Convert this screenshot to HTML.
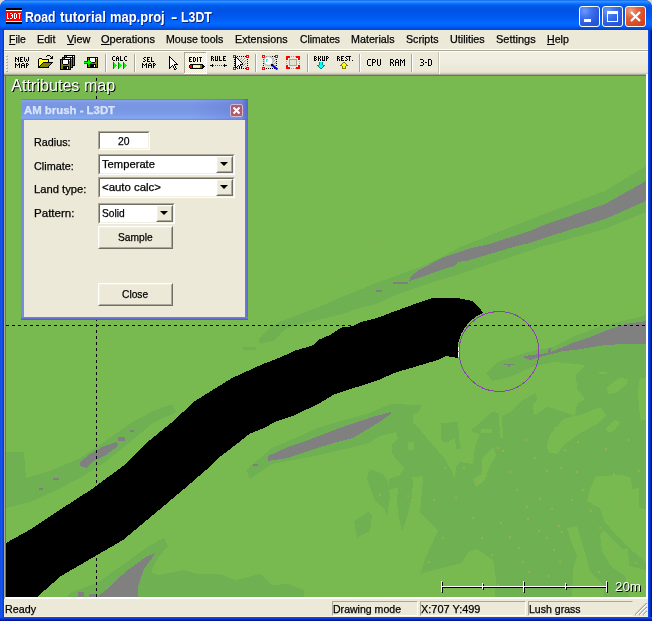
<!DOCTYPE html>
<html><head><meta charset="utf-8">
<style>
*{box-sizing:border-box;margin:0;padding:0}
html,body{width:652px;height:621px;overflow:hidden;background:#DADADA;font-family:"Liberation Sans",sans-serif;font-size:11px;color:#000}
.t{position:absolute;white-space:nowrap;line-height:13px;font-size:11px;transform-origin:0 0;-webkit-text-stroke:0.25px}
#win{position:absolute;left:0;top:0;width:652px;height:621px;background:#0831D9;overflow:hidden;border-radius:7px 7px 0 0;will-change:transform}
#bl{position:absolute;left:0;top:30px;width:4px;height:591px;background:linear-gradient(90deg,#0A3EDC 0,#1A5EF0 1px,#0F52EA 2px,#0840DC 3px,#0734D0 4px)}
#br{position:absolute;left:648px;top:30px;width:4px;height:591px;background:linear-gradient(90deg,#0F52EA 0,#0A44E0 1px,#0632CE 2px,#021C9C 3px,#001488 4px)}
#bb{position:absolute;left:0;top:617px;width:652px;height:4px;background:linear-gradient(#0F52EA 0,#0A44E0 1px,#0632CE 2px,#021C9C 3px,#001488 4px)}
#title{position:absolute;left:0;top:0;width:652px;height:30px;border-radius:7px 7px 0 0;
 background:linear-gradient(#0058EE 0px,#3A93FF 1px,#288EFF 2px,#127DFF 3px,#036FFC 4px,#0262EE 5px,#0057E5 7px,#0054E3 10px,#0055EB 14px,#005BF5 18px,#026AFE 23px,#0061FC 26px,#0048CE 29px,#0144D0 30px)}
#tl{position:absolute;left:0;top:0;width:652px;height:30px;background:#fff}
#title .txt{position:absolute;top:8.7px;font-weight:bold;font-size:14.5px;line-height:16px;color:#fff;text-shadow:1px 1px 0 #0A1F84;white-space:nowrap;transform-origin:0 0}
#ico{position:absolute;left:6px;top:8px;width:16px;height:16px}
.cb{position:absolute;top:6px;width:21px;height:21px;border:1px solid #fff;border-radius:3px;background:radial-gradient(circle at 25% 20%,#6C9AF8 0,#3D70EC 35%,#2858DC 70%,#2350D0 100%)}
#bclose{background:radial-gradient(circle at 25% 20%,#F0A088 0,#E4603A 35%,#DA4A22 70%,#C83C14 100%)}
#menu{position:absolute;left:4px;top:30px;width:644px;height:19px;background:#ECE9D8}
#tbwrap{position:absolute;left:4px;top:49px;width:644px;height:27px;background:#ECE9D8}
#tbsvg{position:absolute;left:0;top:3px}
#map{position:absolute;left:6px;top:76px;width:640px;height:521px;overflow:hidden}
#status{position:absolute;left:4px;top:599px;width:644px;height:18px;background:#ECE9D8}
#dlg{position:absolute;left:21px;top:99px;width:227px;height:221px;background:linear-gradient(90deg,#7888E0 0,#7A8CE2 3px,#7080DC 224px,#5A64D0 227px)}
#dlgb{position:absolute;left:0;top:218px;width:227px;height:3px;background:linear-gradient(#7484DE 0,#6470D6 1.5px,#4E56C8 3px)}
#dlgt{position:absolute;left:0;top:0;width:227px;height:21px;background:linear-gradient(90deg,rgba(90,100,205,0) 0,rgba(90,100,205,0) 75%,rgba(90,100,205,0.35) 97%,rgba(70,80,190,0.7) 100%),linear-gradient(#6C80D6 0,#6C80D6 1px,#86A2EC 1px,#7F9CE8 3px,#7B96E2 5px,#7896E2 10px,#7B9CE8 15px,#82A8F0 19px,#7C9AE6 20px,#7088DC 21px)}
#dlgc{position:absolute;left:3px;top:21px;width:221px;height:197px;background:#ECE9D8}
.sunk{position:absolute;background:#fff;border:1px solid;border-color:#ACA899 #fff #fff #ACA899}
.sunk:before{content:"";position:absolute;left:0;top:0;right:0;bottom:0;border:1px solid;border-color:#716F64 #F1EFE2 #F1EFE2 #716F64}
.btn{position:absolute;background:#ECE9D8;border:1px solid;border-color:#fff #716F64 #716F64 #fff}
.btn:before{content:"";position:absolute;left:0;top:0;right:0;bottom:0;border:1px solid;border-color:#F1EFE2 #ACA899 #ACA899 #F1EFE2}
.arr{position:absolute;width:0;height:0;border-left:4px solid transparent;border-right:4px solid transparent;border-top:4px solid #000}
</style></head><body>
<div id="win">
 <div id="title">
  <svg id="ico" viewBox="0 0 16 16" shape-rendering="crispEdges"><rect width="16" height="16" fill="#000"/><rect y="2" width="16" height="1" fill="#fff"/><rect y="13" width="16" height="1" fill="#fff"/><rect y="3" width="16" height="10" fill="#F00"/>
  <path fill="#fff" d="M1 5h1v6h-1zM2 10h1v1h-1zM4 5h2v1h-2zM6 6h1v4h-1zM5 7h1v1h-1zM4 10h2v1h-2zM8 5h1v6h-1zM9 5h1v1h-1zM9 10h1v1h-1zM10 6h1v4h-1zM12 5h3v1h-3zM13 6h1v5h-1z"/></svg>
  <div class="txt" style="left:25px;transform:scaleX(0.841)">Road</div><div class="txt" style="left:59.5px;transform:scaleX(0.936)">tutorial</div><div class="txt" style="left:110px;transform:scaleX(0.893)">map.proj</div><div class="txt" style="left:170.5px;transform:scaleX(1.322)">-</div><div class="txt" style="left:180.5px;transform:scaleX(0.850)">L3DT</div>
  <div class="cb" id="bmin" style="left:579px"><svg width="19" height="19" style="position:absolute;left:0;top:0" shape-rendering="crispEdges"><rect x="4" y="12" width="7" height="3" fill="#fff"/></svg></div>
  <div class="cb" id="bmax" style="left:602px"><svg width="19" height="19" style="position:absolute;left:0;top:0" shape-rendering="crispEdges"><path d="M4 4h11v11h-11z M5 7h9v7h-9z" fill="#fff" fill-rule="evenodd"/></svg></div>
  <div class="cb" id="bclose" style="left:625px"><svg width="19" height="19" style="position:absolute;left:0;top:0"><path d="M5 5L14 14M14 5L5 14" stroke="#fff" stroke-width="2.2"/></svg></div>
 </div>
 <div id="bl"></div><div id="br"></div><div id="bb"></div>
 <div id="menu">
<span class="t" style="left:5px;top:3px;transform:scaleX(0.949)"><u>F</u>ile</span>
<span class="t" style="left:33px;top:3px;transform:scaleX(0.974)">Edit</span>
<span class="t" style="left:62.5px;top:3px;transform:scaleX(0.987)"><u>V</u>iew</span>
<span class="t" style="left:97px;top:3px;transform:scaleX(1.004)"><u>O</u>perations</span>
<span class="t" style="left:162px;top:3px;transform:scaleX(0.965)">Mouse tools</span>
<span class="t" style="left:231px;top:3px;transform:scaleX(0.976)">Extensions</span>
<span class="t" style="left:295.5px;top:3px;transform:scaleX(0.935)">Climates</span>
<span class="t" style="left:347px;top:3px;transform:scaleX(0.975)">Materials</span>
<span class="t" style="left:402px;top:3px;transform:scaleX(0.967)">Scripts</span>
<span class="t" style="left:446px;top:3px;transform:scaleX(0.980)">Utilities</span>
<span class="t" style="left:492px;top:3px;transform:scaleX(0.997)">Settings</span>
<span class="t" style="left:543px;top:3px;transform:scaleX(0.965)"><u>H</u>elp</span>
 </div>
 <div id="tbwrap">
  <div style="position:absolute;left:0;top:0;width:644px;height:1px;background:#fff"></div>
  <div style="position:absolute;left:0;top:1px;width:644px;height:1px;background:#ACA899"></div>
  <div style="position:absolute;left:0;top:2px;width:644px;height:1px;background:#fff"></div>
  <div style="position:absolute;left:436px;top:3px;width:208px;height:19px;background:linear-gradient(#F2F0E4 0,#EFEDDF 50%,#EAE7D7 100%)"></div>
  <div style="position:absolute;left:0;top:22px;width:644px;height:1px;background:#E9E6D5"></div>
  <div style="position:absolute;left:0;top:23px;width:644px;height:1px;background:#E2DFCD"></div>
  <div style="position:absolute;left:0;top:24px;width:644px;height:1px;background:#D3CFBD"></div>
  <div style="position:absolute;left:0;top:25px;width:642px;height:1px;background:#ACA899"></div>
  <div style="position:absolute;left:0;top:26px;width:642px;height:1px;background:#716F64"></div>
  <svg id="tbsvg" width="644" height="24" viewBox="4 52 644 24" shape-rendering="crispEdges"><defs><pattern id="chk" x="0" y="0" width="2" height="2" patternUnits="userSpaceOnUse"><rect width="2" height="2" fill="#FFFFFF"/><rect x="0" y="0" width="1" height="1" fill="#ECE9D8"/><rect x="1" y="1" width="1" height="1" fill="#ECE9D8"/></pattern></defs><rect x="6" y="55" width="1" height="1" fill="#FFFFFF"/><rect x="7" y="55" width="1" height="1" fill="#D0CCBB"/><rect x="6" y="56" width="2" height="1" fill="#B4B09E"/><rect x="6" y="58" width="1" height="1" fill="#FFFFFF"/><rect x="7" y="58" width="1" height="1" fill="#D0CCBB"/><rect x="6" y="59" width="2" height="1" fill="#B4B09E"/><rect x="6" y="61" width="1" height="1" fill="#FFFFFF"/><rect x="7" y="61" width="1" height="1" fill="#D0CCBB"/><rect x="6" y="62" width="2" height="1" fill="#B4B09E"/><rect x="6" y="64" width="1" height="1" fill="#FFFFFF"/><rect x="7" y="64" width="1" height="1" fill="#D0CCBB"/><rect x="6" y="65" width="2" height="1" fill="#B4B09E"/><rect x="6" y="67" width="1" height="1" fill="#FFFFFF"/><rect x="7" y="67" width="1" height="1" fill="#D0CCBB"/><rect x="6" y="68" width="2" height="1" fill="#B4B09E"/><rect x="6" y="70" width="1" height="1" fill="#FFFFFF"/><rect x="7" y="70" width="1" height="1" fill="#D0CCBB"/><rect x="6" y="71" width="2" height="1" fill="#B4B09E"/><rect x="15" y="57" width="1" height="1" fill="#000"/><rect x="18" y="57" width="1" height="1" fill="#000"/><rect x="15" y="58" width="2" height="1" fill="#000"/><rect x="18" y="58" width="1" height="1" fill="#000"/><rect x="15" y="59" width="1" height="1" fill="#000"/><rect x="17" y="59" width="2" height="1" fill="#000"/><rect x="15" y="60" width="1" height="1" fill="#000"/><rect x="18" y="60" width="1" height="1" fill="#000"/><rect x="15" y="61" width="1" height="1" fill="#000"/><rect x="18" y="61" width="1" height="1" fill="#000"/><rect x="20" y="57" width="3" height="1" fill="#000"/><rect x="20" y="58" width="1" height="1" fill="#000"/><rect x="20" y="59" width="2" height="1" fill="#000"/><rect x="20" y="60" width="1" height="1" fill="#000"/><rect x="20" y="61" width="3" height="1" fill="#000"/><rect x="24" y="57" width="1" height="1" fill="#000"/><rect x="28" y="57" width="1" height="1" fill="#000"/><rect x="24" y="58" width="1" height="1" fill="#000"/><rect x="28" y="58" width="1" height="1" fill="#000"/><rect x="24" y="59" width="1" height="1" fill="#000"/><rect x="26" y="59" width="1" height="1" fill="#000"/><rect x="28" y="59" width="1" height="1" fill="#000"/><rect x="24" y="60" width="1" height="1" fill="#000"/><rect x="26" y="60" width="1" height="1" fill="#000"/><rect x="28" y="60" width="1" height="1" fill="#000"/><rect x="25" y="61" width="1" height="1" fill="#000"/><rect x="27" y="61" width="1" height="1" fill="#000"/><rect x="15" y="63" width="1" height="1" fill="#000"/><rect x="19" y="63" width="1" height="1" fill="#000"/><rect x="15" y="64" width="2" height="1" fill="#000"/><rect x="18" y="64" width="2" height="1" fill="#000"/><rect x="15" y="65" width="1" height="1" fill="#000"/><rect x="17" y="65" width="1" height="1" fill="#000"/><rect x="19" y="65" width="1" height="1" fill="#000"/><rect x="15" y="66" width="1" height="1" fill="#000"/><rect x="19" y="66" width="1" height="1" fill="#000"/><rect x="15" y="67" width="1" height="1" fill="#000"/><rect x="19" y="67" width="1" height="1" fill="#000"/><rect x="22" y="63" width="2" height="1" fill="#000"/><rect x="21" y="64" width="1" height="1" fill="#000"/><rect x="24" y="64" width="1" height="1" fill="#000"/><rect x="21" y="65" width="4" height="1" fill="#000"/><rect x="21" y="66" width="1" height="1" fill="#000"/><rect x="24" y="66" width="1" height="1" fill="#000"/><rect x="21" y="67" width="1" height="1" fill="#000"/><rect x="24" y="67" width="1" height="1" fill="#000"/><rect x="26" y="63" width="2" height="1" fill="#000"/><rect x="26" y="64" width="1" height="1" fill="#000"/><rect x="28" y="64" width="1" height="1" fill="#000"/><rect x="26" y="65" width="2" height="1" fill="#000"/><rect x="26" y="66" width="1" height="1" fill="#000"/><rect x="26" y="67" width="1" height="1" fill="#000"/><rect x="47" y="55" width="3" height="1" fill="#000"/><rect x="46" y="56" width="1" height="1" fill="#000"/><rect x="50" y="56" width="1" height="1" fill="#000"/><rect x="52" y="56" width="1" height="1" fill="#000"/><rect x="51" y="57" width="2" height="1" fill="#000"/><rect x="39" y="58" width="3" height="1" fill="#000"/><rect x="50" y="58" width="3" height="1" fill="#000"/><rect x="38" y="59" width="1" height="1" fill="#000"/><rect x="39" y="59" width="1" height="1" fill="#FFFF00"/><rect x="40" y="59" width="1" height="1" fill="#FFFFFF"/><rect x="41" y="59" width="1" height="1" fill="#FFFF00"/><rect x="42" y="59" width="7" height="1" fill="#000"/><rect x="38" y="60" width="1" height="1" fill="#000"/><rect x="39" y="60" width="1" height="1" fill="#FFFFFF"/><rect x="40" y="60" width="1" height="1" fill="#FFFF00"/><rect x="41" y="60" width="1" height="1" fill="#FFFFFF"/><rect x="42" y="60" width="1" height="1" fill="#FFFF00"/><rect x="43" y="60" width="1" height="1" fill="#FFFFFF"/><rect x="44" y="60" width="1" height="1" fill="#FFFF00"/><rect x="45" y="60" width="1" height="1" fill="#FFFFFF"/><rect x="46" y="60" width="1" height="1" fill="#FFFF00"/><rect x="47" y="60" width="1" height="1" fill="#FFFFFF"/><rect x="48" y="60" width="1" height="1" fill="#000"/><rect x="38" y="61" width="1" height="1" fill="#000"/><rect x="39" y="61" width="1" height="1" fill="#FFFF00"/><rect x="40" y="61" width="1" height="1" fill="#FFFFFF"/><rect x="41" y="61" width="1" height="1" fill="#FFFF00"/><rect x="42" y="61" width="1" height="1" fill="#FFFFFF"/><rect x="43" y="61" width="1" height="1" fill="#FFFF00"/><rect x="44" y="61" width="1" height="1" fill="#FFFFFF"/><rect x="45" y="61" width="1" height="1" fill="#FFFF00"/><rect x="46" y="61" width="1" height="1" fill="#FFFFFF"/><rect x="47" y="61" width="1" height="1" fill="#FFFF00"/><rect x="48" y="61" width="1" height="1" fill="#000"/><rect x="38" y="62" width="1" height="1" fill="#000"/><rect x="39" y="62" width="1" height="1" fill="#FFFFFF"/><rect x="40" y="62" width="1" height="1" fill="#FFFF00"/><rect x="41" y="62" width="1" height="1" fill="#FFFFFF"/><rect x="42" y="62" width="1" height="1" fill="#FFFF00"/><rect x="43" y="62" width="10" height="1" fill="#000"/><rect x="38" y="63" width="1" height="1" fill="#000"/><rect x="39" y="63" width="1" height="1" fill="#FFFF00"/><rect x="40" y="63" width="1" height="1" fill="#FFFFFF"/><rect x="41" y="63" width="1" height="1" fill="#FFFF00"/><rect x="42" y="63" width="1" height="1" fill="#000"/><rect x="43" y="63" width="8" height="1" fill="#808000"/><rect x="51" y="63" width="1" height="1" fill="#000"/><rect x="38" y="64" width="1" height="1" fill="#000"/><rect x="39" y="64" width="1" height="1" fill="#FFFFFF"/><rect x="40" y="64" width="1" height="1" fill="#FFFF00"/><rect x="41" y="64" width="1" height="1" fill="#000"/><rect x="42" y="64" width="8" height="1" fill="#808000"/><rect x="50" y="64" width="1" height="1" fill="#000"/><rect x="38" y="65" width="1" height="1" fill="#000"/><rect x="39" y="65" width="1" height="1" fill="#FFFF00"/><rect x="40" y="65" width="1" height="1" fill="#000"/><rect x="41" y="65" width="8" height="1" fill="#808000"/><rect x="49" y="65" width="1" height="1" fill="#000"/><rect x="38" y="66" width="2" height="1" fill="#000"/><rect x="40" y="66" width="8" height="1" fill="#808000"/><rect x="48" y="66" width="1" height="1" fill="#000"/><rect x="38" y="67" width="11" height="1" fill="#000"/><rect x="64" y="55" width="11" height="1" fill="#000"/><rect x="64" y="56" width="1" height="1" fill="#000"/><rect x="65" y="56" width="1" height="1" fill="#808000"/><rect x="66" y="56" width="1" height="1" fill="#000"/><rect x="67" y="56" width="5" height="1" fill="#FFFFFF"/><rect x="72" y="56" width="1" height="1" fill="#000"/><rect x="73" y="56" width="1" height="1" fill="#FFFFFF"/><rect x="74" y="56" width="1" height="1" fill="#000"/><rect x="64" y="57" width="1" height="1" fill="#000"/><rect x="65" y="57" width="2" height="1" fill="#808000"/><rect x="67" y="57" width="5" height="1" fill="#000"/><rect x="72" y="57" width="2" height="1" fill="#808000"/><rect x="74" y="57" width="1" height="1" fill="#000"/><rect x="64" y="58" width="1" height="1" fill="#000"/><rect x="65" y="58" width="9" height="1" fill="#808000"/><rect x="74" y="58" width="1" height="1" fill="#000"/><rect x="64" y="59" width="1" height="1" fill="#000"/><rect x="65" y="59" width="9" height="1" fill="#808000"/><rect x="74" y="59" width="1" height="1" fill="#000"/><rect x="64" y="60" width="1" height="1" fill="#000"/><rect x="65" y="60" width="9" height="1" fill="#808000"/><rect x="74" y="60" width="1" height="1" fill="#000"/><rect x="64" y="61" width="1" height="1" fill="#000"/><rect x="65" y="61" width="9" height="1" fill="#808000"/><rect x="74" y="61" width="1" height="1" fill="#000"/><rect x="64" y="62" width="1" height="1" fill="#000"/><rect x="65" y="62" width="9" height="1" fill="#808000"/><rect x="74" y="62" width="1" height="1" fill="#000"/><rect x="64" y="63" width="1" height="1" fill="#000"/><rect x="65" y="63" width="9" height="1" fill="#808000"/><rect x="74" y="63" width="1" height="1" fill="#000"/><rect x="64" y="64" width="1" height="1" fill="#000"/><rect x="65" y="64" width="9" height="1" fill="#808000"/><rect x="74" y="64" width="1" height="1" fill="#000"/><rect x="64" y="65" width="11" height="1" fill="#000"/><rect x="62" y="57" width="11" height="1" fill="#000"/><rect x="62" y="58" width="1" height="1" fill="#000"/><rect x="63" y="58" width="1" height="1" fill="#808000"/><rect x="64" y="58" width="1" height="1" fill="#000"/><rect x="65" y="58" width="5" height="1" fill="#FFFFFF"/><rect x="70" y="58" width="1" height="1" fill="#000"/><rect x="71" y="58" width="1" height="1" fill="#FFFFFF"/><rect x="72" y="58" width="1" height="1" fill="#000"/><rect x="62" y="59" width="1" height="1" fill="#000"/><rect x="63" y="59" width="2" height="1" fill="#808000"/><rect x="65" y="59" width="5" height="1" fill="#000"/><rect x="70" y="59" width="2" height="1" fill="#808000"/><rect x="72" y="59" width="1" height="1" fill="#000"/><rect x="62" y="60" width="1" height="1" fill="#000"/><rect x="63" y="60" width="9" height="1" fill="#808000"/><rect x="72" y="60" width="1" height="1" fill="#000"/><rect x="62" y="61" width="1" height="1" fill="#000"/><rect x="63" y="61" width="9" height="1" fill="#808000"/><rect x="72" y="61" width="1" height="1" fill="#000"/><rect x="62" y="62" width="1" height="1" fill="#000"/><rect x="63" y="62" width="9" height="1" fill="#808000"/><rect x="72" y="62" width="1" height="1" fill="#000"/><rect x="62" y="63" width="1" height="1" fill="#000"/><rect x="63" y="63" width="9" height="1" fill="#808000"/><rect x="72" y="63" width="1" height="1" fill="#000"/><rect x="62" y="64" width="1" height="1" fill="#000"/><rect x="63" y="64" width="9" height="1" fill="#808000"/><rect x="72" y="64" width="1" height="1" fill="#000"/><rect x="62" y="65" width="1" height="1" fill="#000"/><rect x="63" y="65" width="9" height="1" fill="#808000"/><rect x="72" y="65" width="1" height="1" fill="#000"/><rect x="62" y="66" width="1" height="1" fill="#000"/><rect x="63" y="66" width="9" height="1" fill="#808000"/><rect x="72" y="66" width="1" height="1" fill="#000"/><rect x="62" y="67" width="11" height="1" fill="#000"/><rect x="60" y="59" width="11" height="1" fill="#000"/><rect x="60" y="60" width="1" height="1" fill="#000"/><rect x="61" y="60" width="1" height="1" fill="#808000"/><rect x="62" y="60" width="1" height="1" fill="#000"/><rect x="63" y="60" width="5" height="1" fill="#FFFFFF"/><rect x="68" y="60" width="1" height="1" fill="#000"/><rect x="69" y="60" width="1" height="1" fill="#FFFFFF"/><rect x="70" y="60" width="1" height="1" fill="#000"/><rect x="60" y="61" width="1" height="1" fill="#000"/><rect x="61" y="61" width="1" height="1" fill="#808000"/><rect x="62" y="61" width="1" height="1" fill="#000"/><rect x="63" y="61" width="5" height="1" fill="#FFFFFF"/><rect x="68" y="61" width="1" height="1" fill="#000"/><rect x="69" y="61" width="1" height="1" fill="#808000"/><rect x="70" y="61" width="1" height="1" fill="#000"/><rect x="60" y="62" width="1" height="1" fill="#000"/><rect x="61" y="62" width="1" height="1" fill="#808000"/><rect x="62" y="62" width="1" height="1" fill="#000"/><rect x="63" y="62" width="5" height="1" fill="#FFFFFF"/><rect x="68" y="62" width="1" height="1" fill="#000"/><rect x="69" y="62" width="1" height="1" fill="#808000"/><rect x="70" y="62" width="1" height="1" fill="#000"/><rect x="60" y="63" width="1" height="1" fill="#000"/><rect x="61" y="63" width="1" height="1" fill="#808000"/><rect x="62" y="63" width="1" height="1" fill="#000"/><rect x="63" y="63" width="5" height="1" fill="#FFFFFF"/><rect x="68" y="63" width="1" height="1" fill="#000"/><rect x="69" y="63" width="1" height="1" fill="#808000"/><rect x="70" y="63" width="1" height="1" fill="#000"/><rect x="60" y="64" width="1" height="1" fill="#000"/><rect x="61" y="64" width="2" height="1" fill="#808000"/><rect x="63" y="64" width="5" height="1" fill="#000"/><rect x="68" y="64" width="2" height="1" fill="#808000"/><rect x="70" y="64" width="1" height="1" fill="#000"/><rect x="60" y="65" width="1" height="1" fill="#000"/><rect x="61" y="65" width="9" height="1" fill="#808000"/><rect x="70" y="65" width="1" height="1" fill="#000"/><rect x="60" y="66" width="1" height="1" fill="#000"/><rect x="61" y="66" width="2" height="1" fill="#808000"/><rect x="63" y="66" width="6" height="1" fill="#000"/><rect x="69" y="66" width="1" height="1" fill="#808000"/><rect x="70" y="66" width="1" height="1" fill="#000"/><rect x="60" y="67" width="1" height="1" fill="#000"/><rect x="61" y="67" width="2" height="1" fill="#808000"/><rect x="63" y="67" width="4" height="1" fill="#000"/><rect x="67" y="67" width="1" height="1" fill="#FFFFFF"/><rect x="68" y="67" width="1" height="1" fill="#000"/><rect x="69" y="67" width="1" height="1" fill="#808000"/><rect x="70" y="67" width="1" height="1" fill="#000"/><rect x="60" y="68" width="1" height="1" fill="#000"/><rect x="61" y="68" width="2" height="1" fill="#808000"/><rect x="63" y="68" width="4" height="1" fill="#000"/><rect x="67" y="68" width="1" height="1" fill="#FFFFFF"/><rect x="68" y="68" width="1" height="1" fill="#000"/><rect x="69" y="68" width="1" height="1" fill="#808000"/><rect x="70" y="68" width="1" height="1" fill="#000"/><rect x="60" y="69" width="11" height="1" fill="#000"/><rect x="87" y="57" width="11" height="1" fill="#000"/><rect x="87" y="58" width="1" height="1" fill="#000"/><rect x="88" y="58" width="1" height="1" fill="#808000"/><rect x="89" y="58" width="1" height="1" fill="#000"/><rect x="90" y="58" width="5" height="1" fill="#FFFFFF"/><rect x="95" y="58" width="1" height="1" fill="#000"/><rect x="96" y="58" width="1" height="1" fill="#FFFFFF"/><rect x="97" y="58" width="1" height="1" fill="#000"/><rect x="87" y="59" width="1" height="1" fill="#000"/><rect x="88" y="59" width="1" height="1" fill="#808000"/><rect x="89" y="59" width="1" height="1" fill="#000"/><rect x="90" y="59" width="5" height="1" fill="#FFFFFF"/><rect x="95" y="59" width="1" height="1" fill="#000"/><rect x="96" y="59" width="1" height="1" fill="#808000"/><rect x="97" y="59" width="1" height="1" fill="#000"/><rect x="87" y="60" width="1" height="1" fill="#000"/><rect x="88" y="60" width="1" height="1" fill="#808000"/><rect x="89" y="60" width="1" height="1" fill="#000"/><rect x="90" y="60" width="5" height="1" fill="#FFFFFF"/><rect x="95" y="60" width="1" height="1" fill="#000"/><rect x="96" y="60" width="1" height="1" fill="#808000"/><rect x="97" y="60" width="1" height="1" fill="#000"/><rect x="87" y="61" width="1" height="1" fill="#000"/><rect x="88" y="61" width="1" height="1" fill="#808000"/><rect x="89" y="61" width="1" height="1" fill="#000"/><rect x="90" y="61" width="5" height="1" fill="#FFFFFF"/><rect x="95" y="61" width="1" height="1" fill="#000"/><rect x="96" y="61" width="1" height="1" fill="#808000"/><rect x="97" y="61" width="1" height="1" fill="#000"/><rect x="87" y="62" width="1" height="1" fill="#000"/><rect x="88" y="62" width="2" height="1" fill="#808000"/><rect x="90" y="62" width="5" height="1" fill="#000"/><rect x="95" y="62" width="2" height="1" fill="#808000"/><rect x="97" y="62" width="1" height="1" fill="#000"/><rect x="87" y="63" width="1" height="1" fill="#000"/><rect x="88" y="63" width="9" height="1" fill="#808000"/><rect x="97" y="63" width="1" height="1" fill="#000"/><rect x="87" y="64" width="1" height="1" fill="#000"/><rect x="88" y="64" width="2" height="1" fill="#808000"/><rect x="90" y="64" width="6" height="1" fill="#000"/><rect x="96" y="64" width="1" height="1" fill="#808000"/><rect x="97" y="64" width="1" height="1" fill="#000"/><rect x="87" y="65" width="1" height="1" fill="#000"/><rect x="88" y="65" width="2" height="1" fill="#808000"/><rect x="90" y="65" width="4" height="1" fill="#000"/><rect x="94" y="65" width="1" height="1" fill="#FFFFFF"/><rect x="95" y="65" width="1" height="1" fill="#000"/><rect x="96" y="65" width="1" height="1" fill="#808000"/><rect x="97" y="65" width="1" height="1" fill="#000"/><rect x="87" y="66" width="1" height="1" fill="#000"/><rect x="88" y="66" width="2" height="1" fill="#808000"/><rect x="90" y="66" width="4" height="1" fill="#000"/><rect x="94" y="66" width="1" height="1" fill="#FFFFFF"/><rect x="95" y="66" width="1" height="1" fill="#000"/><rect x="96" y="66" width="1" height="1" fill="#808000"/><rect x="97" y="66" width="1" height="1" fill="#000"/><rect x="87" y="67" width="11" height="1" fill="#000"/><rect x="88" y="59" width="1" height="1" fill="#008000"/><rect x="88" y="60" width="1" height="1" fill="#00FF00"/><rect x="89" y="60" width="1" height="1" fill="#008000"/><rect x="84" y="61" width="4" height="1" fill="#008000"/><rect x="88" y="61" width="2" height="1" fill="#00FF00"/><rect x="90" y="61" width="1" height="1" fill="#008000"/><rect x="84" y="62" width="7" height="1" fill="#00FF00"/><rect x="91" y="62" width="1" height="1" fill="#008000"/><rect x="84" y="63" width="4" height="1" fill="#008000"/><rect x="88" y="63" width="2" height="1" fill="#00FF00"/><rect x="90" y="63" width="1" height="1" fill="#008000"/><rect x="88" y="64" width="1" height="1" fill="#00FF00"/><rect x="89" y="64" width="1" height="1" fill="#008000"/><rect x="88" y="65" width="1" height="1" fill="#008000"/><rect x="105" y="54" width="1" height="18" fill="#ACA899"/><rect x="106" y="54" width="1" height="18" fill="#FFFFFF"/><rect x="113" y="56" width="2" height="1" fill="#000"/><rect x="112" y="57" width="1" height="1" fill="#000"/><rect x="112" y="58" width="1" height="1" fill="#000"/><rect x="112" y="59" width="1" height="1" fill="#000"/><rect x="113" y="60" width="2" height="1" fill="#000"/><rect x="117" y="56" width="1" height="1" fill="#000"/><rect x="116" y="57" width="1" height="1" fill="#000"/><rect x="118" y="57" width="1" height="1" fill="#000"/><rect x="116" y="58" width="3" height="1" fill="#000"/><rect x="116" y="59" width="1" height="1" fill="#000"/><rect x="118" y="59" width="1" height="1" fill="#000"/><rect x="116" y="60" width="1" height="1" fill="#000"/><rect x="118" y="60" width="1" height="1" fill="#000"/><rect x="120" y="56" width="1" height="1" fill="#000"/><rect x="120" y="57" width="1" height="1" fill="#000"/><rect x="120" y="58" width="1" height="1" fill="#000"/><rect x="120" y="59" width="1" height="1" fill="#000"/><rect x="120" y="60" width="3" height="1" fill="#000"/><rect x="125" y="56" width="2" height="1" fill="#000"/><rect x="124" y="57" width="1" height="1" fill="#000"/><rect x="124" y="58" width="1" height="1" fill="#000"/><rect x="124" y="59" width="1" height="1" fill="#000"/><rect x="125" y="60" width="2" height="1" fill="#000"/><rect x="113" y="62" width="1" height="1" fill="#008000"/><rect x="113" y="63" width="1" height="1" fill="#008000"/><rect x="114" y="63" width="1" height="1" fill="#00FF00"/><rect x="113" y="64" width="1" height="1" fill="#008000"/><rect x="114" y="64" width="2" height="1" fill="#00FF00"/><rect x="113" y="65" width="1" height="1" fill="#008000"/><rect x="114" y="65" width="3" height="1" fill="#00FF00"/><rect x="113" y="66" width="1" height="1" fill="#008000"/><rect x="114" y="66" width="2" height="1" fill="#00FF00"/><rect x="113" y="67" width="1" height="1" fill="#008000"/><rect x="114" y="67" width="1" height="1" fill="#00FF00"/><rect x="113" y="68" width="1" height="1" fill="#008000"/><rect x="118" y="62" width="1" height="1" fill="#008000"/><rect x="118" y="63" width="1" height="1" fill="#008000"/><rect x="119" y="63" width="1" height="1" fill="#00FF00"/><rect x="118" y="64" width="1" height="1" fill="#008000"/><rect x="119" y="64" width="2" height="1" fill="#00FF00"/><rect x="118" y="65" width="1" height="1" fill="#008000"/><rect x="119" y="65" width="3" height="1" fill="#00FF00"/><rect x="118" y="66" width="1" height="1" fill="#008000"/><rect x="119" y="66" width="2" height="1" fill="#00FF00"/><rect x="118" y="67" width="1" height="1" fill="#008000"/><rect x="119" y="67" width="1" height="1" fill="#00FF00"/><rect x="118" y="68" width="1" height="1" fill="#008000"/><rect x="123" y="62" width="1" height="1" fill="#008000"/><rect x="123" y="63" width="1" height="1" fill="#008000"/><rect x="124" y="63" width="1" height="1" fill="#00FF00"/><rect x="123" y="64" width="1" height="1" fill="#008000"/><rect x="124" y="64" width="2" height="1" fill="#00FF00"/><rect x="123" y="65" width="1" height="1" fill="#008000"/><rect x="124" y="65" width="3" height="1" fill="#00FF00"/><rect x="123" y="66" width="1" height="1" fill="#008000"/><rect x="124" y="66" width="2" height="1" fill="#00FF00"/><rect x="123" y="67" width="1" height="1" fill="#008000"/><rect x="124" y="67" width="1" height="1" fill="#00FF00"/><rect x="123" y="68" width="1" height="1" fill="#008000"/><rect x="134" y="54" width="1" height="18" fill="#ACA899"/><rect x="135" y="54" width="1" height="18" fill="#FFFFFF"/><rect x="144" y="57" width="2" height="1" fill="#000"/><rect x="143" y="58" width="1" height="1" fill="#000"/><rect x="144" y="59" width="1" height="1" fill="#000"/><rect x="145" y="60" width="1" height="1" fill="#000"/><rect x="143" y="61" width="2" height="1" fill="#000"/><rect x="147" y="57" width="3" height="1" fill="#000"/><rect x="147" y="58" width="1" height="1" fill="#000"/><rect x="147" y="59" width="2" height="1" fill="#000"/><rect x="147" y="60" width="1" height="1" fill="#000"/><rect x="147" y="61" width="3" height="1" fill="#000"/><rect x="151" y="57" width="1" height="1" fill="#000"/><rect x="151" y="58" width="1" height="1" fill="#000"/><rect x="151" y="59" width="1" height="1" fill="#000"/><rect x="151" y="60" width="1" height="1" fill="#000"/><rect x="151" y="61" width="3" height="1" fill="#000"/><rect x="142" y="63" width="1" height="1" fill="#000"/><rect x="146" y="63" width="1" height="1" fill="#000"/><rect x="142" y="64" width="2" height="1" fill="#000"/><rect x="145" y="64" width="2" height="1" fill="#000"/><rect x="142" y="65" width="1" height="1" fill="#000"/><rect x="144" y="65" width="1" height="1" fill="#000"/><rect x="146" y="65" width="1" height="1" fill="#000"/><rect x="142" y="66" width="1" height="1" fill="#000"/><rect x="146" y="66" width="1" height="1" fill="#000"/><rect x="142" y="67" width="1" height="1" fill="#000"/><rect x="146" y="67" width="1" height="1" fill="#000"/><rect x="149" y="63" width="2" height="1" fill="#000"/><rect x="148" y="64" width="1" height="1" fill="#000"/><rect x="151" y="64" width="1" height="1" fill="#000"/><rect x="148" y="65" width="4" height="1" fill="#000"/><rect x="148" y="66" width="1" height="1" fill="#000"/><rect x="151" y="66" width="1" height="1" fill="#000"/><rect x="148" y="67" width="1" height="1" fill="#000"/><rect x="151" y="67" width="1" height="1" fill="#000"/><rect x="153" y="63" width="2" height="1" fill="#000"/><rect x="153" y="64" width="1" height="1" fill="#000"/><rect x="155" y="64" width="1" height="1" fill="#000"/><rect x="153" y="65" width="2" height="1" fill="#000"/><rect x="153" y="66" width="1" height="1" fill="#000"/><rect x="153" y="67" width="1" height="1" fill="#000"/><rect x="169" y="56" width="1" height="1" fill="#000"/><rect x="169" y="57" width="2" height="1" fill="#000"/><rect x="169" y="58" width="1" height="1" fill="#000"/><rect x="170" y="58" width="1" height="1" fill="#FFFFFF"/><rect x="171" y="58" width="1" height="1" fill="#000"/><rect x="169" y="59" width="1" height="1" fill="#000"/><rect x="170" y="59" width="2" height="1" fill="#FFFFFF"/><rect x="172" y="59" width="1" height="1" fill="#000"/><rect x="169" y="60" width="1" height="1" fill="#000"/><rect x="170" y="60" width="3" height="1" fill="#FFFFFF"/><rect x="173" y="60" width="1" height="1" fill="#000"/><rect x="169" y="61" width="1" height="1" fill="#000"/><rect x="170" y="61" width="4" height="1" fill="#FFFFFF"/><rect x="174" y="61" width="1" height="1" fill="#000"/><rect x="169" y="62" width="1" height="1" fill="#000"/><rect x="170" y="62" width="5" height="1" fill="#FFFFFF"/><rect x="175" y="62" width="1" height="1" fill="#000"/><rect x="169" y="63" width="1" height="1" fill="#000"/><rect x="170" y="63" width="6" height="1" fill="#FFFFFF"/><rect x="176" y="63" width="1" height="1" fill="#000"/><rect x="169" y="64" width="1" height="1" fill="#000"/><rect x="170" y="64" width="4" height="1" fill="#FFFFFF"/><rect x="174" y="64" width="4" height="1" fill="#000"/><rect x="169" y="65" width="1" height="1" fill="#000"/><rect x="170" y="65" width="2" height="1" fill="#FFFFFF"/><rect x="172" y="65" width="1" height="1" fill="#000"/><rect x="173" y="65" width="1" height="1" fill="#FFFFFF"/><rect x="174" y="65" width="1" height="1" fill="#000"/><rect x="169" y="66" width="1" height="1" fill="#000"/><rect x="170" y="66" width="1" height="1" fill="#FFFFFF"/><rect x="171" y="66" width="1" height="1" fill="#000"/><rect x="173" y="66" width="1" height="1" fill="#000"/><rect x="174" y="66" width="1" height="1" fill="#FFFFFF"/><rect x="175" y="66" width="1" height="1" fill="#000"/><rect x="169" y="67" width="2" height="1" fill="#000"/><rect x="173" y="67" width="1" height="1" fill="#000"/><rect x="174" y="67" width="1" height="1" fill="#FFFFFF"/><rect x="175" y="67" width="1" height="1" fill="#000"/><rect x="169" y="68" width="1" height="1" fill="#000"/><rect x="174" y="68" width="1" height="1" fill="#000"/><rect x="175" y="68" width="1" height="1" fill="#FFFFFF"/><rect x="176" y="68" width="1" height="1" fill="#000"/><rect x="174" y="69" width="2" height="1" fill="#000"/><rect x="184" y="52" width="23" height="1" fill="#ACA899"/><rect x="184" y="52" width="1" height="22" fill="#ACA899"/><rect x="206" y="52" width="1" height="22" fill="#FFFFFF"/><rect x="184" y="73" width="23" height="1" fill="#FFFFFF"/><rect x="185" y="53" width="21" height="20" fill="url(#chk)"/><rect x="189" y="57" width="3" height="1" fill="#000"/><rect x="189" y="58" width="1" height="1" fill="#000"/><rect x="189" y="59" width="2" height="1" fill="#000"/><rect x="189" y="60" width="1" height="1" fill="#000"/><rect x="189" y="61" width="3" height="1" fill="#000"/><rect x="193" y="57" width="2" height="1" fill="#000"/><rect x="193" y="58" width="1" height="1" fill="#000"/><rect x="195" y="58" width="1" height="1" fill="#000"/><rect x="193" y="59" width="1" height="1" fill="#000"/><rect x="195" y="59" width="1" height="1" fill="#000"/><rect x="193" y="60" width="1" height="1" fill="#000"/><rect x="195" y="60" width="1" height="1" fill="#000"/><rect x="193" y="61" width="2" height="1" fill="#000"/><rect x="197" y="57" width="1" height="1" fill="#000"/><rect x="197" y="58" width="1" height="1" fill="#000"/><rect x="197" y="59" width="1" height="1" fill="#000"/><rect x="197" y="60" width="1" height="1" fill="#000"/><rect x="197" y="61" width="1" height="1" fill="#000"/><rect x="199" y="57" width="3" height="1" fill="#000"/><rect x="200" y="58" width="1" height="1" fill="#000"/><rect x="200" y="59" width="1" height="1" fill="#000"/><rect x="200" y="60" width="1" height="1" fill="#000"/><rect x="200" y="61" width="1" height="1" fill="#000"/><rect x="190" y="64" width="13" height="1" fill="#000"/><rect x="189" y="65" width="1" height="1" fill="#000"/><rect x="190" y="65" width="2" height="1" fill="#FF0000"/><rect x="192" y="65" width="1" height="1" fill="#000"/><rect x="193" y="65" width="7" height="1" fill="#FFFF00"/><rect x="200" y="65" width="2" height="1" fill="#808000"/><rect x="202" y="65" width="2" height="1" fill="#000"/><rect x="189" y="66" width="1" height="1" fill="#000"/><rect x="190" y="66" width="2" height="1" fill="#FF0000"/><rect x="192" y="66" width="1" height="1" fill="#000"/><rect x="193" y="66" width="7" height="1" fill="#FFFFC0"/><rect x="200" y="66" width="2" height="1" fill="#808000"/><rect x="202" y="66" width="3" height="1" fill="#000"/><rect x="189" y="67" width="1" height="1" fill="#000"/><rect x="190" y="67" width="2" height="1" fill="#FF0000"/><rect x="192" y="67" width="1" height="1" fill="#000"/><rect x="193" y="67" width="7" height="1" fill="#FFFF00"/><rect x="200" y="67" width="2" height="1" fill="#808000"/><rect x="202" y="67" width="2" height="1" fill="#000"/><rect x="190" y="68" width="13" height="1" fill="#000"/><rect x="211" y="56" width="2" height="1" fill="#000"/><rect x="211" y="57" width="1" height="1" fill="#000"/><rect x="213" y="57" width="1" height="1" fill="#000"/><rect x="211" y="58" width="2" height="1" fill="#000"/><rect x="211" y="59" width="1" height="1" fill="#000"/><rect x="213" y="59" width="1" height="1" fill="#000"/><rect x="211" y="60" width="1" height="1" fill="#000"/><rect x="213" y="60" width="1" height="1" fill="#000"/><rect x="215" y="56" width="1" height="1" fill="#000"/><rect x="217" y="56" width="1" height="1" fill="#000"/><rect x="215" y="57" width="1" height="1" fill="#000"/><rect x="217" y="57" width="1" height="1" fill="#000"/><rect x="215" y="58" width="1" height="1" fill="#000"/><rect x="217" y="58" width="1" height="1" fill="#000"/><rect x="215" y="59" width="1" height="1" fill="#000"/><rect x="217" y="59" width="1" height="1" fill="#000"/><rect x="215" y="60" width="3" height="1" fill="#000"/><rect x="219" y="56" width="1" height="1" fill="#000"/><rect x="219" y="57" width="1" height="1" fill="#000"/><rect x="219" y="58" width="1" height="1" fill="#000"/><rect x="219" y="59" width="1" height="1" fill="#000"/><rect x="219" y="60" width="3" height="1" fill="#000"/><rect x="223" y="56" width="3" height="1" fill="#000"/><rect x="223" y="57" width="1" height="1" fill="#000"/><rect x="223" y="58" width="2" height="1" fill="#000"/><rect x="223" y="59" width="1" height="1" fill="#000"/><rect x="223" y="60" width="3" height="1" fill="#000"/><rect x="212" y="64" width="1" height="1" fill="#000"/><rect x="224" y="64" width="1" height="1" fill="#000"/><rect x="210" y="65" width="3" height="1" fill="#000"/><rect x="213" y="65" width="1" height="1" fill="#FF0000"/><rect x="215" y="65" width="1" height="1" fill="#FF0000"/><rect x="217" y="65" width="1" height="1" fill="#FF0000"/><rect x="219" y="65" width="1" height="1" fill="#FF0000"/><rect x="221" y="65" width="1" height="1" fill="#FF0000"/><rect x="223" y="65" width="1" height="1" fill="#FF0000"/><rect x="224" y="65" width="3" height="1" fill="#000"/><rect x="212" y="66" width="1" height="1" fill="#000"/><rect x="224" y="66" width="1" height="1" fill="#000"/><rect x="233" y="55" width="3" height="3" fill="#FF0000"/><rect x="234" y="56" width="1" height="1" fill="#FFFFFF"/><rect x="246" y="55" width="3" height="3" fill="#FF0000"/><rect x="247" y="56" width="1" height="1" fill="#FFFFFF"/><rect x="233" y="67" width="3" height="3" fill="#FF0000"/><rect x="234" y="68" width="1" height="1" fill="#FFFFFF"/><rect x="246" y="67" width="3" height="3" fill="#FF0000"/><rect x="247" y="68" width="1" height="1" fill="#FFFFFF"/><rect x="237" y="56" width="1" height="1" fill="#000"/><rect x="237" y="68" width="1" height="1" fill="#000"/><rect x="239" y="56" width="1" height="1" fill="#000"/><rect x="239" y="68" width="1" height="1" fill="#000"/><rect x="241" y="56" width="1" height="1" fill="#000"/><rect x="241" y="68" width="1" height="1" fill="#000"/><rect x="243" y="56" width="1" height="1" fill="#000"/><rect x="243" y="68" width="1" height="1" fill="#000"/><rect x="245" y="56" width="1" height="1" fill="#000"/><rect x="245" y="68" width="1" height="1" fill="#000"/><rect x="247" y="59" width="1" height="1" fill="#000"/><rect x="234" y="59" width="1" height="1" fill="#000"/><rect x="247" y="61" width="1" height="1" fill="#000"/><rect x="234" y="61" width="1" height="1" fill="#000"/><rect x="247" y="63" width="1" height="1" fill="#000"/><rect x="234" y="63" width="1" height="1" fill="#000"/><rect x="247" y="65" width="1" height="1" fill="#000"/><rect x="234" y="65" width="1" height="1" fill="#000"/><rect x="238" y="58" width="1" height="1" fill="#A0A0A0"/><rect x="237" y="59" width="1" height="1" fill="#A0A0A0"/><rect x="236" y="60" width="1" height="1" fill="#A0A0A0"/><rect x="241" y="58" width="1" height="1" fill="#A0A0A0"/><rect x="240" y="59" width="1" height="1" fill="#A0A0A0"/><rect x="239" y="60" width="1" height="1" fill="#A0A0A0"/><rect x="238" y="61" width="1" height="1" fill="#A0A0A0"/><rect x="237" y="62" width="1" height="1" fill="#A0A0A0"/><rect x="236" y="63" width="1" height="1" fill="#A0A0A0"/><rect x="244" y="58" width="1" height="1" fill="#A0A0A0"/><rect x="243" y="59" width="1" height="1" fill="#A0A0A0"/><rect x="242" y="60" width="1" height="1" fill="#A0A0A0"/><rect x="241" y="61" width="1" height="1" fill="#A0A0A0"/><rect x="240" y="62" width="1" height="1" fill="#A0A0A0"/><rect x="239" y="63" width="1" height="1" fill="#A0A0A0"/><rect x="238" y="64" width="1" height="1" fill="#A0A0A0"/><rect x="237" y="65" width="1" height="1" fill="#A0A0A0"/><rect x="236" y="66" width="1" height="1" fill="#A0A0A0"/><rect x="245" y="60" width="1" height="1" fill="#A0A0A0"/><rect x="244" y="61" width="1" height="1" fill="#A0A0A0"/><rect x="243" y="62" width="1" height="1" fill="#A0A0A0"/><rect x="242" y="63" width="1" height="1" fill="#A0A0A0"/><rect x="241" y="64" width="1" height="1" fill="#A0A0A0"/><rect x="240" y="65" width="1" height="1" fill="#A0A0A0"/><rect x="239" y="66" width="1" height="1" fill="#A0A0A0"/><rect x="245" y="63" width="1" height="1" fill="#A0A0A0"/><rect x="244" y="64" width="1" height="1" fill="#A0A0A0"/><rect x="243" y="65" width="1" height="1" fill="#A0A0A0"/><rect x="242" y="66" width="1" height="1" fill="#A0A0A0"/><rect x="245" y="66" width="1" height="1" fill="#A0A0A0"/><rect x="235" y="56" width="1" height="1" fill="#000"/><rect x="235" y="57" width="2" height="1" fill="#000"/><rect x="235" y="58" width="1" height="1" fill="#000"/><rect x="236" y="58" width="1" height="1" fill="#FFFFFF"/><rect x="237" y="58" width="1" height="1" fill="#000"/><rect x="235" y="59" width="1" height="1" fill="#000"/><rect x="236" y="59" width="2" height="1" fill="#FFFFFF"/><rect x="238" y="59" width="1" height="1" fill="#000"/><rect x="235" y="60" width="1" height="1" fill="#000"/><rect x="236" y="60" width="3" height="1" fill="#FFFFFF"/><rect x="239" y="60" width="1" height="1" fill="#000"/><rect x="235" y="61" width="1" height="1" fill="#000"/><rect x="236" y="61" width="4" height="1" fill="#FFFFFF"/><rect x="240" y="61" width="1" height="1" fill="#000"/><rect x="235" y="62" width="1" height="1" fill="#000"/><rect x="236" y="62" width="5" height="1" fill="#FFFFFF"/><rect x="241" y="62" width="1" height="1" fill="#000"/><rect x="235" y="63" width="1" height="1" fill="#000"/><rect x="236" y="63" width="6" height="1" fill="#FFFFFF"/><rect x="242" y="63" width="1" height="1" fill="#000"/><rect x="235" y="64" width="1" height="1" fill="#000"/><rect x="236" y="64" width="4" height="1" fill="#FFFFFF"/><rect x="240" y="64" width="3" height="1" fill="#000"/><rect x="235" y="65" width="1" height="1" fill="#000"/><rect x="236" y="65" width="2" height="1" fill="#FFFFFF"/><rect x="238" y="65" width="1" height="1" fill="#000"/><rect x="239" y="65" width="1" height="1" fill="#FFFFFF"/><rect x="240" y="65" width="1" height="1" fill="#000"/><rect x="235" y="66" width="1" height="1" fill="#000"/><rect x="236" y="66" width="1" height="1" fill="#FFFFFF"/><rect x="237" y="66" width="1" height="1" fill="#000"/><rect x="239" y="66" width="1" height="1" fill="#000"/><rect x="240" y="66" width="1" height="1" fill="#FFFFFF"/><rect x="241" y="66" width="1" height="1" fill="#000"/><rect x="235" y="67" width="2" height="1" fill="#000"/><rect x="239" y="67" width="1" height="1" fill="#000"/><rect x="240" y="67" width="1" height="1" fill="#FFFFFF"/><rect x="241" y="67" width="1" height="1" fill="#000"/><rect x="255" y="54" width="1" height="18" fill="#ACA899"/><rect x="256" y="54" width="1" height="18" fill="#FFFFFF"/><rect x="262" y="55" width="3" height="3" fill="#FF0000"/><rect x="263" y="56" width="1" height="1" fill="#FFFFFF"/><rect x="275" y="55" width="3" height="3" fill="#FF0000"/><rect x="276" y="56" width="1" height="1" fill="#FFFFFF"/><rect x="262" y="67" width="3" height="3" fill="#FF0000"/><rect x="263" y="68" width="1" height="1" fill="#FFFFFF"/><rect x="266" y="56" width="1" height="1" fill="#000"/><rect x="266" y="68" width="1" height="1" fill="#000"/><rect x="268" y="56" width="1" height="1" fill="#000"/><rect x="268" y="68" width="1" height="1" fill="#000"/><rect x="270" y="56" width="1" height="1" fill="#000"/><rect x="270" y="68" width="1" height="1" fill="#000"/><rect x="272" y="56" width="1" height="1" fill="#000"/><rect x="272" y="68" width="1" height="1" fill="#000"/><rect x="274" y="56" width="1" height="1" fill="#000"/><rect x="274" y="68" width="1" height="1" fill="#000"/><rect x="276" y="59" width="1" height="1" fill="#000"/><rect x="263" y="59" width="1" height="1" fill="#000"/><rect x="276" y="61" width="1" height="1" fill="#000"/><rect x="263" y="61" width="1" height="1" fill="#000"/><rect x="276" y="63" width="1" height="1" fill="#000"/><rect x="263" y="63" width="1" height="1" fill="#000"/><rect x="276" y="65" width="1" height="1" fill="#000"/><rect x="263" y="65" width="1" height="1" fill="#000"/><rect x="270" y="58" width="1" height="1" fill="#A0A0A0"/><rect x="273" y="58" width="1" height="1" fill="#A0A0A0"/><rect x="272" y="59" width="1" height="1" fill="#A0A0A0"/><rect x="271" y="60" width="1" height="1" fill="#A0A0A0"/><rect x="270" y="61" width="1" height="1" fill="#A0A0A0"/><rect x="275" y="59" width="1" height="1" fill="#A0A0A0"/><rect x="274" y="60" width="1" height="1" fill="#A0A0A0"/><rect x="273" y="61" width="1" height="1" fill="#A0A0A0"/><rect x="272" y="62" width="1" height="1" fill="#A0A0A0"/><rect x="271" y="63" width="1" height="1" fill="#A0A0A0"/><rect x="270" y="64" width="1" height="1" fill="#A0A0A0"/><rect x="275" y="62" width="1" height="1" fill="#A0A0A0"/><rect x="274" y="63" width="1" height="1" fill="#A0A0A0"/><rect x="273" y="64" width="1" height="1" fill="#A0A0A0"/><rect x="272" y="65" width="1" height="1" fill="#A0A0A0"/><rect x="271" y="66" width="1" height="1" fill="#A0A0A0"/><rect x="275" y="65" width="1" height="1" fill="#A0A0A0"/><rect x="274" y="66" width="1" height="1" fill="#A0A0A0"/><circle cx="268.5" cy="61" r="4.5" fill="#FFFFFF" stroke="#C0C0C0" stroke-width="1.4" shape-rendering="auto"/><rect x="266" y="59" width="2" height="1" fill="#00FFFF"/><rect x="266" y="60" width="1" height="2" fill="#00FFFF"/><path d="M271.5 64.5 L277.5 69.5" stroke="#0000FF" stroke-width="2.2" shape-rendering="auto"/><rect x="271" y="64" width="2" height="2" fill="#000"/><rect x="286" y="56" width="4" height="2" fill="#FF0000"/><rect x="286" y="56" width="2" height="4" fill="#FF0000"/><rect x="288" y="58" width="1" height="1" fill="#FFFFFF"/><rect x="296" y="56" width="4" height="2" fill="#FF0000"/><rect x="298" y="56" width="2" height="4" fill="#FF0000"/><rect x="297" y="58" width="1" height="1" fill="#FFFFFF"/><rect x="286" y="67" width="4" height="2" fill="#FF0000"/><rect x="286" y="65" width="2" height="4" fill="#FF0000"/><rect x="288" y="66" width="1" height="1" fill="#FFFFFF"/><rect x="296" y="67" width="4" height="2" fill="#FF0000"/><rect x="298" y="65" width="2" height="4" fill="#FF0000"/><rect x="297" y="66" width="1" height="1" fill="#FFFFFF"/><rect x="291" y="56" width="1" height="1" fill="#A0A0A0"/><rect x="291" y="68" width="1" height="1" fill="#A0A0A0"/><rect x="293" y="56" width="1" height="1" fill="#A0A0A0"/><rect x="293" y="68" width="1" height="1" fill="#A0A0A0"/><rect x="295" y="56" width="1" height="1" fill="#A0A0A0"/><rect x="295" y="68" width="1" height="1" fill="#A0A0A0"/><rect x="286" y="61" width="1" height="1" fill="#A0A0A0"/><rect x="299" y="61" width="1" height="1" fill="#A0A0A0"/><rect x="286" y="63" width="1" height="1" fill="#A0A0A0"/><rect x="299" y="63" width="1" height="1" fill="#A0A0A0"/><rect x="289.5" y="59.5" width="7" height="6" fill="#E4E1D0" stroke="#A8A594" stroke-width="1"/><rect x="307" y="54" width="1" height="18" fill="#ACA899"/><rect x="308" y="54" width="1" height="18" fill="#FFFFFF"/><rect x="314" y="56" width="2" height="1" fill="#000"/><rect x="314" y="57" width="1" height="1" fill="#000"/><rect x="316" y="57" width="1" height="1" fill="#000"/><rect x="314" y="58" width="2" height="1" fill="#000"/><rect x="314" y="59" width="1" height="1" fill="#000"/><rect x="316" y="59" width="1" height="1" fill="#000"/><rect x="314" y="60" width="2" height="1" fill="#000"/><rect x="318" y="56" width="1" height="1" fill="#000"/><rect x="320" y="56" width="1" height="1" fill="#000"/><rect x="318" y="57" width="1" height="1" fill="#000"/><rect x="320" y="57" width="1" height="1" fill="#000"/><rect x="318" y="58" width="2" height="1" fill="#000"/><rect x="318" y="59" width="1" height="1" fill="#000"/><rect x="320" y="59" width="1" height="1" fill="#000"/><rect x="318" y="60" width="1" height="1" fill="#000"/><rect x="320" y="60" width="1" height="1" fill="#000"/><rect x="322" y="56" width="1" height="1" fill="#000"/><rect x="324" y="56" width="1" height="1" fill="#000"/><rect x="322" y="57" width="1" height="1" fill="#000"/><rect x="324" y="57" width="1" height="1" fill="#000"/><rect x="322" y="58" width="1" height="1" fill="#000"/><rect x="324" y="58" width="1" height="1" fill="#000"/><rect x="322" y="59" width="1" height="1" fill="#000"/><rect x="324" y="59" width="1" height="1" fill="#000"/><rect x="322" y="60" width="3" height="1" fill="#000"/><rect x="326" y="56" width="2" height="1" fill="#000"/><rect x="326" y="57" width="1" height="1" fill="#000"/><rect x="328" y="57" width="1" height="1" fill="#000"/><rect x="326" y="58" width="2" height="1" fill="#000"/><rect x="326" y="59" width="1" height="1" fill="#000"/><rect x="326" y="60" width="1" height="1" fill="#000"/><rect x="319" y="62" width="1" height="1" fill="#009090"/><rect x="320" y="62" width="2" height="1" fill="#00FFFF"/><rect x="322" y="62" width="1" height="1" fill="#009090"/><rect x="319" y="63" width="1" height="1" fill="#009090"/><rect x="320" y="63" width="2" height="1" fill="#00FFFF"/><rect x="322" y="63" width="1" height="1" fill="#009090"/><rect x="319" y="64" width="1" height="1" fill="#009090"/><rect x="320" y="64" width="2" height="1" fill="#00FFFF"/><rect x="322" y="64" width="1" height="1" fill="#009090"/><rect x="317" y="65" width="2" height="1" fill="#009090"/><rect x="319" y="65" width="4" height="1" fill="#00FFFF"/><rect x="323" y="65" width="2" height="1" fill="#009090"/><rect x="318" y="66" width="1" height="1" fill="#009090"/><rect x="319" y="66" width="4" height="1" fill="#00FFFF"/><rect x="323" y="66" width="1" height="1" fill="#009090"/><rect x="319" y="67" width="1" height="1" fill="#009090"/><rect x="320" y="67" width="2" height="1" fill="#00FFFF"/><rect x="322" y="67" width="1" height="1" fill="#009090"/><rect x="320" y="68" width="2" height="1" fill="#009090"/><rect x="337" y="56" width="2" height="1" fill="#000"/><rect x="337" y="57" width="1" height="1" fill="#000"/><rect x="339" y="57" width="1" height="1" fill="#000"/><rect x="337" y="58" width="2" height="1" fill="#000"/><rect x="337" y="59" width="1" height="1" fill="#000"/><rect x="339" y="59" width="1" height="1" fill="#000"/><rect x="337" y="60" width="1" height="1" fill="#000"/><rect x="339" y="60" width="1" height="1" fill="#000"/><rect x="341" y="56" width="3" height="1" fill="#000"/><rect x="341" y="57" width="1" height="1" fill="#000"/><rect x="341" y="58" width="2" height="1" fill="#000"/><rect x="341" y="59" width="1" height="1" fill="#000"/><rect x="341" y="60" width="3" height="1" fill="#000"/><rect x="346" y="56" width="2" height="1" fill="#000"/><rect x="345" y="57" width="1" height="1" fill="#000"/><rect x="346" y="58" width="1" height="1" fill="#000"/><rect x="347" y="59" width="1" height="1" fill="#000"/><rect x="345" y="60" width="2" height="1" fill="#000"/><rect x="348" y="56" width="3" height="1" fill="#000"/><rect x="349" y="57" width="1" height="1" fill="#000"/><rect x="349" y="58" width="1" height="1" fill="#000"/><rect x="349" y="59" width="1" height="1" fill="#000"/><rect x="349" y="60" width="1" height="1" fill="#000"/><rect x="352" y="60" width="1" height="1" fill="#000"/><rect x="343" y="62" width="2" height="1" fill="#808000"/><rect x="342" y="63" width="1" height="1" fill="#808000"/><rect x="343" y="63" width="2" height="1" fill="#FFFF00"/><rect x="345" y="63" width="1" height="1" fill="#808000"/><rect x="341" y="64" width="1" height="1" fill="#808000"/><rect x="342" y="64" width="4" height="1" fill="#FFFF00"/><rect x="346" y="64" width="1" height="1" fill="#808000"/><rect x="340" y="65" width="2" height="1" fill="#808000"/><rect x="342" y="65" width="4" height="1" fill="#FFFF00"/><rect x="346" y="65" width="2" height="1" fill="#808000"/><rect x="342" y="66" width="1" height="1" fill="#808000"/><rect x="343" y="66" width="2" height="1" fill="#FFFF00"/><rect x="345" y="66" width="1" height="1" fill="#808000"/><rect x="342" y="67" width="1" height="1" fill="#808000"/><rect x="343" y="67" width="2" height="1" fill="#FFFF00"/><rect x="345" y="67" width="1" height="1" fill="#808000"/><rect x="342" y="68" width="4" height="1" fill="#808000"/><rect x="359" y="54" width="1" height="18" fill="#ACA899"/><rect x="360" y="54" width="1" height="18" fill="#FFFFFF"/><rect x="368" y="59" width="3" height="1" fill="#000"/><rect x="367" y="60" width="1" height="1" fill="#000"/><rect x="367" y="61" width="1" height="1" fill="#000"/><rect x="367" y="62" width="1" height="1" fill="#000"/><rect x="367" y="63" width="1" height="1" fill="#000"/><rect x="367" y="64" width="1" height="1" fill="#000"/><rect x="368" y="65" width="3" height="1" fill="#000"/><rect x="372" y="59" width="3" height="1" fill="#000"/><rect x="372" y="60" width="1" height="1" fill="#000"/><rect x="375" y="60" width="1" height="1" fill="#000"/><rect x="372" y="61" width="1" height="1" fill="#000"/><rect x="375" y="61" width="1" height="1" fill="#000"/><rect x="372" y="62" width="3" height="1" fill="#000"/><rect x="372" y="63" width="1" height="1" fill="#000"/><rect x="372" y="64" width="1" height="1" fill="#000"/><rect x="372" y="65" width="1" height="1" fill="#000"/><rect x="377" y="59" width="1" height="1" fill="#000"/><rect x="380" y="59" width="1" height="1" fill="#000"/><rect x="377" y="60" width="1" height="1" fill="#000"/><rect x="380" y="60" width="1" height="1" fill="#000"/><rect x="377" y="61" width="1" height="1" fill="#000"/><rect x="380" y="61" width="1" height="1" fill="#000"/><rect x="377" y="62" width="1" height="1" fill="#000"/><rect x="380" y="62" width="1" height="1" fill="#000"/><rect x="377" y="63" width="1" height="1" fill="#000"/><rect x="380" y="63" width="1" height="1" fill="#000"/><rect x="377" y="64" width="1" height="1" fill="#000"/><rect x="380" y="64" width="1" height="1" fill="#000"/><rect x="378" y="65" width="2" height="1" fill="#000"/><rect x="390" y="59" width="3" height="1" fill="#000"/><rect x="390" y="60" width="1" height="1" fill="#000"/><rect x="393" y="60" width="1" height="1" fill="#000"/><rect x="390" y="61" width="1" height="1" fill="#000"/><rect x="393" y="61" width="1" height="1" fill="#000"/><rect x="390" y="62" width="3" height="1" fill="#000"/><rect x="390" y="63" width="1" height="1" fill="#000"/><rect x="392" y="63" width="1" height="1" fill="#000"/><rect x="390" y="64" width="1" height="1" fill="#000"/><rect x="393" y="64" width="1" height="1" fill="#000"/><rect x="390" y="65" width="1" height="1" fill="#000"/><rect x="393" y="65" width="1" height="1" fill="#000"/><rect x="396" y="59" width="2" height="1" fill="#000"/><rect x="395" y="60" width="1" height="1" fill="#000"/><rect x="398" y="60" width="1" height="1" fill="#000"/><rect x="395" y="61" width="1" height="1" fill="#000"/><rect x="398" y="61" width="1" height="1" fill="#000"/><rect x="395" y="62" width="4" height="1" fill="#000"/><rect x="395" y="63" width="1" height="1" fill="#000"/><rect x="398" y="63" width="1" height="1" fill="#000"/><rect x="395" y="64" width="1" height="1" fill="#000"/><rect x="398" y="64" width="1" height="1" fill="#000"/><rect x="395" y="65" width="1" height="1" fill="#000"/><rect x="398" y="65" width="1" height="1" fill="#000"/><rect x="400" y="59" width="1" height="1" fill="#000"/><rect x="404" y="59" width="1" height="1" fill="#000"/><rect x="400" y="60" width="2" height="1" fill="#000"/><rect x="403" y="60" width="2" height="1" fill="#000"/><rect x="400" y="61" width="1" height="1" fill="#000"/><rect x="402" y="61" width="1" height="1" fill="#000"/><rect x="404" y="61" width="1" height="1" fill="#000"/><rect x="400" y="62" width="1" height="1" fill="#000"/><rect x="402" y="62" width="1" height="1" fill="#000"/><rect x="404" y="62" width="1" height="1" fill="#000"/><rect x="400" y="63" width="1" height="1" fill="#000"/><rect x="404" y="63" width="1" height="1" fill="#000"/><rect x="400" y="64" width="1" height="1" fill="#000"/><rect x="404" y="64" width="1" height="1" fill="#000"/><rect x="400" y="65" width="1" height="1" fill="#000"/><rect x="404" y="65" width="1" height="1" fill="#000"/><rect x="411" y="54" width="1" height="18" fill="#ACA899"/><rect x="412" y="54" width="1" height="18" fill="#FFFFFF"/><rect x="420" y="59" width="3" height="1" fill="#000"/><rect x="423" y="60" width="1" height="1" fill="#000"/><rect x="423" y="61" width="1" height="1" fill="#000"/><rect x="421" y="62" width="2" height="1" fill="#000"/><rect x="423" y="63" width="1" height="1" fill="#000"/><rect x="423" y="64" width="1" height="1" fill="#000"/><rect x="420" y="65" width="3" height="1" fill="#000"/><rect x="425" y="62" width="2" height="1" fill="#000"/><rect x="428" y="59" width="3" height="1" fill="#000"/><rect x="428" y="60" width="1" height="1" fill="#000"/><rect x="431" y="60" width="1" height="1" fill="#000"/><rect x="428" y="61" width="1" height="1" fill="#000"/><rect x="431" y="61" width="1" height="1" fill="#000"/><rect x="428" y="62" width="1" height="1" fill="#000"/><rect x="431" y="62" width="1" height="1" fill="#000"/><rect x="428" y="63" width="1" height="1" fill="#000"/><rect x="431" y="63" width="1" height="1" fill="#000"/><rect x="428" y="64" width="1" height="1" fill="#000"/><rect x="431" y="64" width="1" height="1" fill="#000"/><rect x="428" y="65" width="3" height="1" fill="#000"/><rect x="438" y="52" width="1" height="22" fill="#C5C2B2"/><rect x="439" y="52" width="1" height="22" fill="#FFFFFF"/></svg>
 </div>
 <div style="position:absolute;left:4px;top:76px;width:1px;height:523px;background:#ACA899"></div>
 <div style="position:absolute;left:5px;top:76px;width:1px;height:522px;background:#716F64"></div>
 <div style="position:absolute;left:646px;top:74px;width:2px;height:525px;background:#fff"></div>
 <div style="position:absolute;left:5px;top:597px;width:643px;height:2px;background:#fff"></div>
 <div id="map">
<svg width="640" height="521" viewBox="6 76 640 521" shape-rendering="crispEdges" style="position:absolute;left:0;top:0">
<rect x="6" y="76" width="640" height="521" fill="#79BA50"/>
<g fill="#6FB152">
<!-- long halo band above the road -->
<polygon points="6,452 24,452 26,478 50,471 80,458 104,442 129,424 153,411 172,404 176,412 153,423 129,443 104,463 80,478 55,491 30,502 6,508"/>
<rect x="243" y="347" width="13" height="3"/>
<polygon points="259,339 268,329 279,322 300,314 319,307 339,298 359,290 378,282 390,278 420,267 440,258 460,247 544,214 605,191 646,166 646,212 605,229 544,246 483,266 460,274 430,283 396,295 376,304 359,308 346,313 322,319 297,325 285,329 273,341 260,344"/>
<!-- halo D -->
<polygon points="164,538 168,546 158,558 151,572 158,575 183,570 198,574 220,574 235,580 244,578 260,574 272,585 288,584 304,590 304,597 66,597 72,592 97,583 121,566 149,546"/>
<!-- halo C2 + big splotch -->
<polygon points="246,470 272,448 320,427 369,413 391,404 421,405 419,412 413,414 413,423 421,431 432,444 445,459 452,472 455,479 456,466 460,462 473,464 475,447 480,434 470,431 482,421 492,412 499,413 500,438 503,438 502,416 510,412 523,400 536,393 537,400 533,405 534,415 548,407 563,412 575,416 577,404 585,399 577,389 576,374 585,365 575,364 553,362 532,367 510,377 492,381 486,373 498,362 524,353 553,347 575,336 605,325 636,318 646,315 646,597 495,597 496,579 493,560 486,555 477,549 468,552 462,563 442,568 420,574 426,557 431,546 438,531 431,524 420,513 423,480 423,476 412,477 413,480 412,497 406,521 402,531 399,519 397,502 398,487 389,490 389,479 400,475 404,468 398,462 392,453 392,444 398,438 396,432 380,436 369,443 353,447 320,455 272,464 250,479"/>
<polygon points="370,469 383,474 388,481 390,497 387,516 384,508 376,502 370,488 367,478"/>
<polygon points="354,521 368,512 372,515 370,531 362,535 357,538"/>
<polygon points="441,423 458,422 459,438 461,449 456,449 455,438 446,443 441,440"/>
</g>
<g fill="#79BA50">
<polygon points="482,459 493,447 496,455 489,468 484,481 476,487 473,479 482,474"/>
<polygon points="481,429 492,429 492,433 481,433"/>
<polygon points="408,442 414,442 414,450 408,450"/>
<polygon points="547,445 550,435 563,419 584,414 600,407 606,415 597,424 582,432 566,443 557,454 548,452"/>
<polygon points="607,387 619,378 628,379 627,384 616,393 608,394"/>
<rect x="599" y="372" width="8" height="2"/>
<polygon points="606,429 614,420 620,422 616,429 609,433"/>
<polygon points="640,378 646,378 646,419 641,421 639,408 638,391"/>
<polygon points="587,501 590,489 596,476 623,475 631,478 632,489 639,488 639,508 646,509 646,562 628,547 617,536 604,521 600,508"/>
<polygon points="600,534 604,530 622,549 628,549 629,566 646,570 646,597 630,597 627,589 626,577 611,566 602,551"/>
<polygon points="567,528 577,526 581,540 586,555 590,572 604,585 604,597 572,597 573,570 577,555 571,542"/>
</g>
<g fill="#808080">
<polygon points="393,282 409,282 411,276 419,270 444,257 468,249 493,243 517,235 530,231 544,225 605,204 646,181 646,201 605,219 544,238 530,243 517,246 493,253 468,260.5 458,262 455,266 444,269 419,278 409,281 408,284 393,284"/>
<rect x="376" y="290" width="6" height="2"/>
<polygon points="524,356 540,354 548,353 549,348 551,348 551,352 556,350 563,347 575,342 590,337 605,331 625,324 646,321 646,344 625,344 605,345 590,347.5 575,350 563,351 556,353 540,357 530,360 524,358"/>
<rect x="504" y="364" width="10" height="1"/><rect x="508" y="365" width="2" height="2"/>
<polygon points="80,462 90,454 104,446 117,442 118,446 106,455 92,462 86,468 80,466"/>
<rect x="118" y="437" width="7" height="4"/><rect x="130" y="430" width="4" height="2"/><rect x="53" y="478" width="6" height="2"/><rect x="39" y="488" width="4" height="2"/>
<polygon points="155,553 152,558 144,569 138,586 138,597 97,597 106,590 115,581 129,569 146,557"/>
<rect x="78" y="592" width="6" height="5"/><rect x="89" y="594" width="7" height="3"/>
<polygon points="268,456 288,447 311,439 337,429 369,418 391,412 391,414 378,423 353,438 337,442 311,450 288,458 268,461"/>
<rect x="253" y="464" width="5" height="2"/>
</g>
<g fill="#96B048"><rect x="519" y="390" width="2" height="2"/><rect x="524" y="390" width="2" height="2"/><rect x="409" y="517" width="2" height="2"/><rect x="433" y="499" width="2" height="2"/><rect x="444" y="467" width="2" height="2"/><rect x="463" y="467" width="2" height="2"/><rect x="477" y="480" width="2" height="2"/><rect x="485" y="475" width="2" height="2"/><rect x="497" y="447" width="2" height="2"/><rect x="502" y="450" width="2" height="2"/><rect x="509" y="471" width="2" height="2"/><rect x="516" y="489" width="2" height="2"/><rect x="526" y="506" width="2" height="2"/><rect x="527" y="518" width="2" height="2"/><rect x="538" y="530" width="2" height="2"/><rect x="546" y="537" width="2" height="2"/><rect x="553" y="549" width="2" height="2"/><rect x="560" y="467" width="2" height="2"/><rect x="564" y="449" width="2" height="2"/><rect x="576" y="471" width="2" height="2"/><rect x="582" y="489" width="2" height="2"/><rect x="590" y="510" width="2" height="2"/><rect x="599" y="527" width="2" height="2"/><rect x="607" y="547" width="2" height="2"/><rect x="613" y="473" width="2" height="2"/><rect x="622" y="498" width="2" height="2"/><rect x="625" y="521" width="2" height="2"/><rect x="635" y="562" width="2" height="2"/><rect x="598" y="571" width="2" height="2"/><rect x="587" y="581" width="2" height="2"/><rect x="472" y="517" width="2" height="2"/><rect x="481" y="537" width="2" height="2"/><rect x="491" y="554" width="2" height="2"/><rect x="500" y="522" width="2" height="2"/><rect x="509" y="536" width="2" height="2"/><rect x="518" y="547" width="2" height="2"/><rect x="522" y="561" width="2" height="2"/><rect x="528" y="571" width="2" height="2"/><rect x="539" y="498" width="2" height="2"/><rect x="551" y="508" width="2" height="2"/><rect x="558" y="525" width="2" height="2"/><rect x="561" y="531" width="2" height="2"/><rect x="571" y="499" width="2" height="2"/><rect x="546" y="470" width="2" height="2"/><rect x="534" y="457" width="2" height="2"/><rect x="525" y="439" width="2" height="2"/><rect x="554" y="427" width="2" height="2"/><rect x="577" y="441" width="2" height="2"/><rect x="605" y="448" width="2" height="2"/><rect x="628" y="439" width="2" height="2"/><rect x="638" y="470" width="2" height="2"/><rect x="455" y="497" width="2" height="2"/><rect x="442" y="537" width="2" height="2"/><rect x="428" y="561" width="2" height="2"/><rect x="396" y="473" width="2" height="2"/><rect x="407" y="495" width="2" height="2"/><rect x="379" y="494" width="2" height="2"/><rect x="559" y="561" width="2" height="2"/><rect x="575" y="586" width="2" height="2"/><rect x="548" y="575" width="2" height="2"/><rect x="607" y="593" width="2" height="2"/><rect x="497" y="584" width="2" height="2"/><rect x="380" y="240" width="2" height="2"/><rect x="370" y="241" width="2" height="2"/><rect x="393" y="246" width="2" height="2"/><rect x="345" y="271" width="2" height="2"/><rect x="438" y="217" width="2" height="2"/></g>
<!-- road -->
<path fill="#000" d="M6,543 L31,529 61,509 92,489 123,466 150,440 171,423 195,401 232,378 263,364 280,357.5 295,350.6 313,345.3 318,340 331,334.5 341,327.6 354,326 360,322.3 378,317.7 390,313 412,305 432,298 458,298 472,301 480,308 483,313 A41.5 41.5 0 0 0 457.5 351.5 L457.5 357.5 455,357.5 446,356 438,360 421,365 394,373 381,379 357,387 335,394 320,403 293,416 277,421 263,428.5 250,433.5 238,443 218.5,458 206,470 184,489 153,515 123,540 92,558 61,576 37,597 6,597Z"/>
<rect x="458" y="347" width="1" height="10" fill="#fff"/>
<!-- crosshair -->
<g fill="#000">
<rect x="6" y="325" width="640" height="1" fill="url(#dh)"/>
<rect x="96" y="76" width="1" height="521" fill="url(#dv)"/>
</g>
<defs>
<pattern id="dh" x="0" y="0" width="6" height="1" patternUnits="userSpaceOnUse"><rect width="3" height="1" fill="#000"/></pattern>
<pattern id="dv" x="0" y="0" width="1" height="6" patternUnits="userSpaceOnUse"><rect width="1" height="3" fill="#000"/></pattern>
</defs>
<!-- brush circle -->
<circle cx="499" cy="351.5" r="40" fill="none" stroke="#8847AF" stroke-width="1" shape-rendering="crispEdges"/>
<!-- scale bar -->
<g fill="#000"><rect x="442" y="587" width="166" height="1"/><rect x="442" y="582" width="1" height="11"/><rect x="483" y="584" width="1" height="6"/><rect x="524" y="582" width="1" height="11"/><rect x="566" y="584" width="1" height="6"/><rect x="607" y="582" width="1" height="11"/></g>
<g fill="#fff"><rect x="441" y="586" width="166" height="1"/><rect x="441" y="581" width="1" height="11"/><rect x="482" y="583" width="1" height="6"/><rect x="523" y="581" width="1" height="11"/><rect x="565" y="583" width="1" height="6"/><rect x="606" y="581" width="1" height="11"/></g>
<g font-family="Liberation Sans" shape-rendering="auto">
<text x="616" y="591.5" font-size="13" fill="#000" textLength="26" lengthAdjust="spacingAndGlyphs">20m</text>
<text x="615" y="590.5" font-size="13" fill="#fff" textLength="26" lengthAdjust="spacingAndGlyphs">20m</text>
<text x="12.3" y="92" font-size="16" fill="#000" textLength="104" lengthAdjust="spacingAndGlyphs">Attributes map</text>
<text x="11.3" y="91" font-size="16" fill="#fff" textLength="104" lengthAdjust="spacingAndGlyphs">Attributes map</text>
</g>
</svg>

 </div>
 <div id="dlg"><div id="dlgt"></div><div id="dlgc"></div><div id="dlgb"></div>
<span class="t" style="left:2.5px;top:5.3px;font-weight:bold;color:#D8E4F8;transform:scaleX(1.035)">AM brush - L3DT</span>
<div style="position:absolute;left:209px;top:5px;width:13px;height:13px;border:1px solid #D2B8D2;border-radius:2px;background:#AE5C6C"><svg width="11" height="11" style="position:absolute;left:0;top:0"><path d="M2.5 2.5L8.5 8.5M8.5 2.5L2.5 8.5" stroke="#fff" stroke-width="2"/></svg></div>
<span class="t" style="left:13px;top:36.5px;transform:scaleX(0.979)">Radius:</span>
<span class="t" style="left:13px;top:60.5px;transform:scaleX(0.985)">Climate:</span>
<span class="t" style="left:13px;top:83.5px;transform:scaleX(1.019)">Land type:</span>
<span class="t" style="left:13px;top:107.5px;transform:scaleX(1.052)">Pattern:</span>
<div class="sunk" style="left:77px;top:32px;width:52px;height:19px"></div>
<span class="t" style="left:97px;top:35.5px;transform:scaleX(0.943)">20</span>
<div class="sunk" style="left:77px;top:55px;width:137px;height:21px"></div>
<div class="btn" style="left:195px;top:57px;width:17px;height:17px"><div class="arr" style="left:3px;top:5px"></div></div>
<span class="t" style="left:80.7px;top:59px;transform:scaleX(1.019)">Temperate</span>
<div class="sunk" style="left:77px;top:78px;width:137px;height:21px"></div>
<div class="btn" style="left:195px;top:80px;width:17px;height:17px"><div class="arr" style="left:3px;top:5px"></div></div>
<span class="t" style="left:80.7px;top:82px;transform:scaleX(1.037)">&lt;auto calc&gt;</span>
<div class="sunk" style="left:77px;top:104px;width:77px;height:21px"></div>
<div class="btn" style="left:135px;top:106px;width:17px;height:17px"><div class="arr" style="left:3px;top:5px"></div></div>
<span class="t" style="left:80.7px;top:108px;transform:scaleX(0.931)">Solid</span>
<div class="btn" style="left:77px;top:127px;width:75px;height:23px"></div>
<span class="t" style="left:97.1555px;top:131.7px;transform:scaleX(0.930)">Sample</span>
<div class="btn" style="left:77px;top:184px;width:75px;height:23px"></div>
<span class="t" style="left:101.433px;top:188.7px;transform:scaleX(0.930)">Close</span>
 </div>
 <div id="status">
<span class="t" style="left:0.8px;top:3.9px;transform:scaleX(0.975)">Ready</span>
<span class="t" style="left:328.9px;top:3.9px;transform:scaleX(0.959)">Drawing mode</span>
<span class="t" style="left:417px;top:3.9px;transform:scaleX(0.995)">X:707 Y:499</span>
<span class="t" style="left:524.8px;top:3.9px;transform:scaleX(0.959)">Lush grass</span>
<div style="position:absolute;left:0;top:17px;width:644px;height:1px;background:#F6F0DC"></div><div style="position:absolute;left:0;top:0;width:1px;height:18px;background:#F6F0DC"></div>
<div style="position:absolute;left:328px;top:2px;width:86px;height:15px;border:1px solid;border-color:#ACA899 #fff #fff #ACA899"></div>
<div style="position:absolute;left:416px;top:2px;width:106px;height:15px;border:1px solid;border-color:#ACA899 #fff #fff #ACA899"></div>
<div style="position:absolute;left:524px;top:2px;width:105px;height:15px;border:1px solid;border-color:#ACA899 transparent #fff #ACA899"></div>
<svg width="13" height="13" style="position:absolute;left:631px;top:4px" shape-rendering="crispEdges"><path d="M12 0L0 12M12 4L4 12M12 8L8 12" stroke="#ACA899" stroke-width="1.5" shape-rendering="auto"/><path d="M12 1L1 12M12 5L5 12M12 9L9 12" stroke="#fff" stroke-width="1" shape-rendering="auto"/></svg>

 </div>
</div>
</body></html>
